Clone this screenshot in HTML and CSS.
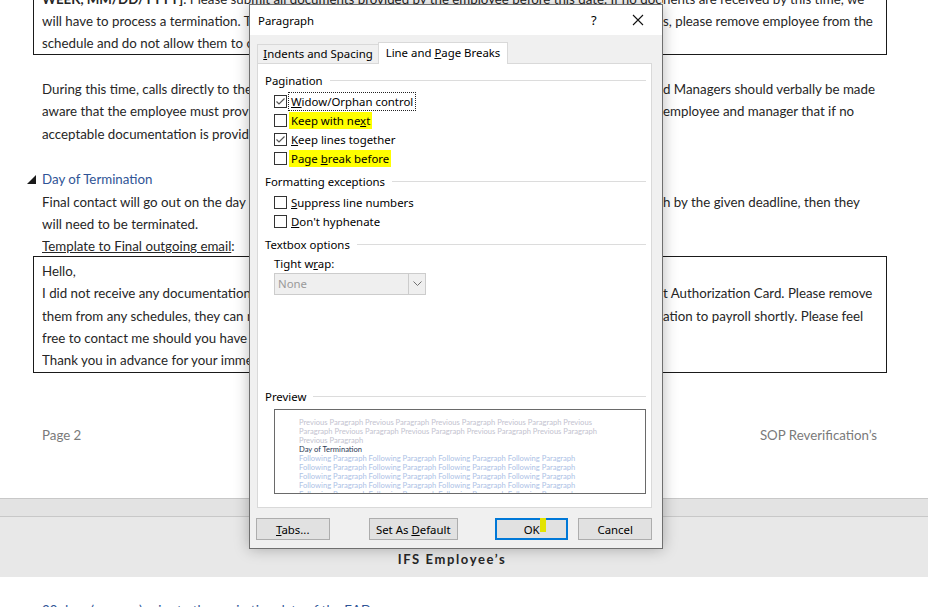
FILE: index.html
```html
<!DOCTYPE html>
<html lang="en">
<head>
<meta charset="UTF-8">
<meta name="viewport" content="width=device-width, initial-scale=1.0">
<title>SOP Reverification - Paragraph</title>
<link rel="stylesheet" href="styles.css">
</head>
<body>

<!-- Страница документа -->
<div class="page">
    <div class="boxed box-top">
        <div class="ln"><span class="l"><b>WEEK, MM/DD/YYYY]</b>. Please submit all documents provided by the employee before this date. If no docum</span><span class="r">nents are received by this time, we</span></div>
        <div class="ln"><span class="l">will have to process a termination. To avoid any issues with scheduling or payroll for these employees, please</span><span class="r">s, please remove employee from the</span></div>
        <div class="ln"><span class="l">schedule and do not allow them to clock in until the documentation has been received.</span><span class="r"></span></div>
    </div>

    <div class="para">
        <div class="ln"><span class="l">During this time, calls directly to the employee should be made by the store an</span><span class="r">d Managers should verbally be made</span></div>
        <div class="ln"><span class="l">aware that the employee must provide documentation. Please remind the </span><span class="r">employee and manager that if no</span></div>
        <div class="ln"><span class="l">acceptable documentation is provided, the employee will be terminated.</span><span class="r"></span></div>
    </div>

    <div class="para">
        <div class="heading">
            <svg class="tri" width="9" height="9" viewBox="0 0 9 9"><polygon points="9,0 9,9 0,9" fill="#1a1a1a"/></svg>
            Day of Termination
        </div>
        <div class="ln"><span class="l">Final contact will go out on the day of expiration. If documentation is not provided to us, or not seen throug</span><span class="r">h by the given deadline, then they</span></div>
        <div class="ln"><span class="l">will need to be terminated.</span><span class="r"></span></div>
        <div class="ln"><span class="l"><u>Template to Final outgoing email</u>:</span><span class="r"></span></div>
    </div>

    <div class="boxed box-mail">
        <div class="ln"><span class="l">Hello,</span><span class="r"></span></div>
        <div class="ln"><span class="l">I did not receive any documentation to update your Employmen</span><span class="r">t Authorization Card. Please remove</span></div>
        <div class="ln"><span class="l">them from any schedules, they can no longer work. I will be sending the termin</span><span class="r">ation to payroll shortly. Please feel</span></div>
        <div class="ln"><span class="l">free to contact me should you have any questions.</span><span class="r"></span></div>
        <div class="ln"><span class="l">Thank you in advance for your immediate attention to this matter.</span><span class="r"></span></div>
    </div>

    <div class="footer">
        <span>Page 2</span>
        <span>SOP Reverification’s</span>
    </div>
</div>

<div class="page-break">
    <div class="gap"></div>
    <div class="header-next">IFS Employee’s</div>
</div>
<div class="next-line">30 days (or more) prior to the expiration date of the EAD</div>

<!-- Окно "Paragraph" -->
<div class="dlg">
    <div class="dlg-title">
        <span class="dlg-name">Paragraph</span>
        <span class="help">?</span>
        <svg class="close" width="12" height="12" viewBox="0 0 12 12"><path d="M1 1 L11 11 M11 1 L1 11" stroke="#111" stroke-width="1.1"/></svg>
    </div>
    <div class="dlg-body">
        <div class="tabs">
            <div class="tab"><u>I</u>ndents and Spacing</div>
            <div class="tab active">Line and <u>P</u>age Breaks</div>
        </div>
        <div class="panel">
            <div class="grp"><span>Pagination</span></div>
            <div class="checks">
                <div class="chk"><span class="cb"><svg width="11" height="11" viewBox="0 0 11 11"><polyline points="1.5,5.5 4,8 9.5,2.5" fill="none" stroke="#555" stroke-width="1.2"/></svg></span><span class="txt focus"><u>W</u>idow/Orphan control</span></div>
                <div class="chk"><span class="cb"></span><span class="txt hl">Keep with ne<u>x</u>t</span></div>
                <div class="chk"><span class="cb"><svg width="11" height="11" viewBox="0 0 11 11"><polyline points="1.5,5.5 4,8 9.5,2.5" fill="none" stroke="#555" stroke-width="1.2"/></svg></span><span class="txt"><u>K</u>eep lines together</span></div>
                <div class="chk"><span class="cb"></span><span class="txt hl">Page <u>b</u>reak before</span></div>
            </div>
            <div class="grp grp-next"><span>Formatting exceptions</span></div>
            <div class="checks">
                <div class="chk"><span class="cb"></span><span class="txt"><u>S</u>uppress line numbers</span></div>
                <div class="chk"><span class="cb"></span><span class="txt"><u>D</u>on't hyphenate</span></div>
            </div>
            <div class="grp grp-next"><span>Textbox options</span></div>
            <div class="wrap-label">Tight w<u>r</u>ap:</div>
            <div class="combo">
                <span class="combo-val">None</span>
                <span class="combo-btn"><svg width="9" height="6" viewBox="0 0 9 6"><polyline points="0.5,0.5 4.5,4.5 8.5,0.5" fill="none" stroke="#707070" stroke-width="1"/></svg></span>
            </div>
            <div class="grp grp-preview"><span>Preview</span></div>
            <div class="preview">
                <div class="pv prev">Previous Paragraph Previous Paragraph Previous Paragraph Previous Paragraph Previous</div>
                <div class="pv prev">Paragraph Previous Paragraph Previous Paragraph Previous Paragraph Previous Paragraph</div>
                <div class="pv prev">Previous Paragraph</div>
                <div class="pv cur">Day of Termination</div>
                <div class="pv next">Following Paragraph Following Paragraph Following Paragraph Following Paragraph</div>
                <div class="pv next">Following Paragraph Following Paragraph Following Paragraph Following Paragraph</div>
                <div class="pv next">Following Paragraph Following Paragraph Following Paragraph Following Paragraph</div>
                <div class="pv next">Following Paragraph Following Paragraph Following Paragraph Following Paragraph</div>
                <div class="pv next">Following Paragraph Following Paragraph Following Paragraph Following Paragraph</div>
            </div>
        </div>
        <div class="btns">
            <button class="btn btn-tabs"><u>T</u>abs...</button>
            <button class="btn btn-default">Set As <u>D</u>efault</button>
            <button class="btn btn-ok">OK<span class="caret"></span></button>
            <button class="btn btn-cancel">Cancel</button>
        </div>
    </div>
</div>

</body>
</html>
```

FILE: styles.css
```css
* {
    box-sizing: border-box;
}

body {
    margin: 0;
    height: 607px;
    overflow: hidden;
    background-color: #fff;
    font-family: Lato, "Noto Sans", sans-serif;
    font-size: 13.3px;
    color: #262626;
}

/* Страница документа */
.page {
    margin-top: -13px;
    padding: 0 41px 0 33px;
}

.ln {
    display: grid;
    grid-template-columns: 621px auto;
    height: 22.4px;
    line-height: 22.4px;
    white-space: nowrap;
}

.ln .l,
.ln .r {
    overflow: hidden;
}

.boxed {
    border: 1px solid #1a1a1a;
    padding-left: 8px;
}

.box-top .ln {
    height: 22px;
    line-height: 22px;
}

.para {
    padding-left: 9px;
    margin-top: 23px;
}

.heading {
    position: relative;
    height: 22.4px;
    line-height: 22.4px;
    color: #2f5496;
}

.tri {
    position: absolute;
    left: -15px;
    top: 7px;
}

.box-mail {
    margin-top: -2px;
    padding-top: 3px;
}

.footer {
    display: flex;
    justify-content: space-between;
    margin-top: 51px;
    padding: 0 10px 0 9px;
    line-height: 22px;
    color: #7a7a7a;
}

.page-break {
    margin-top: 52px;
    border-top: 1px solid #c8c8c8;
    background-color: #e8e8e8;
}

.page-break .gap {
    height: 18px;
    background-color: #e3e3e3;
    border-bottom: 1px solid #c8c8c8;
}

.header-next {
    height: 60px;
    padding: 34px 24px 0 0;
    text-align: center;
    font-weight: bold;
    font-size: 13px;
    letter-spacing: 1.6px;
    color: #262626;
}

.next-line {
    margin-top: 22px;
    padding-left: 42px;
    color: #2f5496;
    line-height: 22px;
}

/* Диалог */
.dlg {
    position: absolute;
    left: 249px;
    top: 4px;
    width: 414px;
    height: 545px;
    border: 1px solid #6f6f6f;
    background-color: #f0f0f0;
    box-shadow: 0 0 14px rgba(0, 0, 0, 0.28);
    font-family: "Noto Sans", sans-serif;
    font-size: 11.4px;
    color: #000;
}

.dlg-title {
    display: flex;
    align-items: center;
    height: 30px;
    padding-left: 8px;
    background-color: #fff;
}

.dlg-name {
    flex: 1;
}

.help {
    width: 12px;
    margin-right: 29px;
    font-size: 13px;
}

.close {
    margin-right: 18px;
}

.dlg-body {
    padding: 7px 10px 0 7px;
}

.tabs {
    display: flex;
    align-items: flex-end;
    height: 21px;
}

.tab {
    height: 19px;
    line-height: 18px;
    text-align: center;
    border: 1px solid #d9d9d9;
    border-bottom: none;
}

.tab:first-child {
    width: 121px;
    border-right: none;
}

.tab.active {
    position: relative;
    width: 130px;
    height: 22px;
    margin-bottom: -1px;
    line-height: 20px;
    background-color: #fff;
}

.panel {
    height: 445px;
    border: 1px solid #d9d9d9;
    background-color: #fff;
    padding: 7px 5px 0 7px;
}

.grp {
    display: flex;
    align-items: center;
    height: 18px;
}

.grp::after {
    content: "";
    flex: 1;
    height: 1px;
    margin-left: 7px;
    background-color: #dcdcdc;
}

.grp-next {
    margin-top: 4px;
}

.grp-preview {
    margin-top: 92px;
}

.checks {
    margin-top: 3px;
    padding-left: 9px;
}

.chk {
    display: flex;
    align-items: center;
    height: 19px;
}

.cb {
    display: flex;
    align-items: center;
    justify-content: center;
    width: 13px;
    height: 13px;
    margin-right: 2px;
    border: 1px solid #333;
    background-color: #fff;
}

.txt {
    padding: 0 2px;
    line-height: 17px;
}

.txt.hl {
    background-color: #ffff00;
}

.txt.focus {
    outline: 1px dotted #222;
}

.wrap-label {
    margin-top: 2px;
    padding-left: 9px;
    height: 18px;
    line-height: 18px;
}

.combo {
    display: flex;
    width: 152px;
    height: 22px;
    margin-left: 9px;
    border: 1px solid #cccccc;
    background-color: #efefef;
    color: #9a9a9a;
}

.combo-val {
    flex: 1;
    padding-left: 3px;
    line-height: 20px;
}

.combo-btn {
    display: flex;
    align-items: center;
    justify-content: center;
    width: 17px;
    border-left: 1px solid #cccccc;
}

.preview {
    height: 85px;
    margin-top: 4px;
    margin-left: 9px;
    padding: 8px 0 0 24px;
    border: 1px solid #6a6a6a;
    overflow: hidden;
    font-family: Lato, sans-serif;
    font-size: 7.6px;
    white-space: nowrap;
}

.pv {
    height: 9px;
    line-height: 9px;
}

.pv.prev {
    color: #c3c3cf;
}

.pv.cur {
    color: #2b3a55;
}

.pv.next {
    color: #adc2e6;
}

.btns {
    display: flex;
    margin-top: 10px;
}

.btn {
    position: relative;
    height: 22px;
    padding: 0;
    border: 1px solid #adadad;
    background-color: #e1e1e1;
    font-family: "Noto Sans", sans-serif;
    font-size: 11.4px;
    color: #000;
}

.btn-tabs {
    width: 74px;
    margin-left: -1px;
}

.btn-default {
    width: 90px;
    margin-left: 39px;
}

.btn-ok {
    width: 74px;
    margin-left: 37px;
    border: 2px solid #0078d7;
}

.btn-cancel {
    width: 74px;
    margin-left: 10px;
}

.caret {
    position: absolute;
    left: 43px;
    top: -2px;
    width: 6px;
    height: 14px;
    background-color: #e3e300;
}
```
